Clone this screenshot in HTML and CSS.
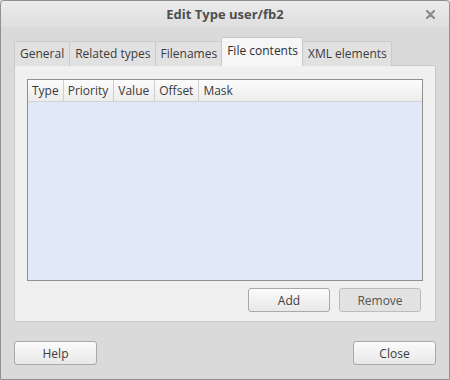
FILE: index.html
```html
<!DOCTYPE html>
<html lang="en">
<head>
    <meta charset="UTF-8">
    <title>Edit Type user/fb2</title>
    <link rel="stylesheet" href="styles.css">
</head>
<body>
    <div class="window">
        <div class="titlebar">
            <span class="title">Edit Type user/fb2</span>
            <svg class="close-x" width="9" height="9" viewBox="0 0 9 9">
                <path d="M1 1L8 8M8 1L1 8" stroke="#8a8a8a" stroke-width="2.2" stroke-linecap="round"/>
            </svg>
        </div>
        <div class="content">
            <div class="tabs">
                <div class="tab">General</div>
                <div class="tab">Related types</div>
                <div class="tab">Filenames</div>
                <div class="tab active">File contents</div>
                <div class="tab">XML elements</div>
            </div>
            <div class="panel">
                <div class="tree">
                    <div class="tree-header">
                        <div class="col">Type</div>
                        <div class="col">Priority</div>
                        <div class="col">Value</div>
                        <div class="col">Offset</div>
                        <div class="col last">Mask</div>
                    </div>
                    <div class="tree-body"></div>
                </div>
                <div class="panel-buttons">
                    <button class="btn">Add</button>
                    <button class="btn disabled">Remove</button>
                </div>
            </div>
            <div class="dialog-buttons">
                <button class="btn wide">Help</button>
                <button class="btn wide">Close</button>
            </div>
        </div>
    </div>
</body>
</html>
```

FILE: styles.css
```css
* {
    box-sizing: border-box;
    margin: 0;
    padding: 0;
}
body {
    font-family: "Open Sans", "Noto Sans", sans-serif;
    font-size: 12px;
    color: #3c3c3c;
    background: #dadada;
}
/* window frame */
.window {
    width: 450px;
    height: 380px;
    border: 1px solid #909090;
    border-radius: 4px 4px 0 0;
    background: #dadada;
    display: flex;
    flex-direction: column;
}
.titlebar {
    height: 26px;
    position: relative;
    display: flex;
    align-items: center;
    justify-content: center;
    background: linear-gradient(#ececec, #dedede);
    border-radius: 4px 4px 0 0;
}
.title {
    font-weight: bold;
    font-size: 13px;
    color: #4f4f4f;
}
.close-x {
    position: absolute;
    right: 14px;
    top: 9px;
}
.content {
    flex: 1;
    padding: 11px 13px 0 13px;
    display: flex;
    flex-direction: column;
}
/* tabs */
.tabs {
    display: flex;
    align-items: flex-end;
    height: 28px;
    position: relative;
    z-index: 1;
}
.tab {
    height: 25px;
    padding: 0 4px 0 5px;
    line-height: 23px;
    background: #e1e1e1;
    border: 1px solid #cbcbcb;
    border-bottom: none;
    border-right: none;
    border-radius: 2px 2px 0 0;
}
.tab:first-child {
    padding-right: 5px;
}
.tab:last-child {
    border-right: 1px solid #cbcbcb;
}
.tab.active {
    height: 29px;
    line-height: 26px;
    background: #f6f6f6;
    border-color: #c8c8c8;
    border-right: 1px solid #c8c8c8;
    color: #2e2e2e;
}
.tab.active + .tab {
    border-left: none;
}
.panel {
    height: 257px;
    margin-top: -1px;
    background: #f0f0f0;
    border: 1px solid #c8c8c8;
    border-radius: 0 2px 2px 2px;
    padding: 13px 12px 0 12px;
}
/* list */
.tree {
    height: 202px;
    border: 1px solid #8f8f8f;
    display: flex;
    flex-direction: column;
}
.tree-header {
    height: 22px;
    display: flex;
    background: linear-gradient(#fcfcfc, #ececec);
    border-bottom: 1px solid #d4d4d4;
}
.col {
    padding: 0 5px 0 4px;
    line-height: 22px;
    border-right: 1px solid #cfcfcf;
    color: #3a3a3a;
}
.col:first-child {
    padding-right: 4px;
}
.col.last {
    border-right: none;
}
.tree-body {
    flex: 1;
    background: #e1e8f8;
}
/* buttons */
.panel-buttons {
    display: flex;
    justify-content: flex-end;
    gap: 9px;
    margin-top: 7px;
    padding-right: 2px;
}
.btn {
    width: 82px;
    height: 24px;
    font-family: inherit;
    font-size: 12px;
    color: #3c3c3c;
    background: linear-gradient(#fbfbfb, #e8e8e8);
    border: 1px solid #a9a9a9;
    border-radius: 3px;
}
.btn.disabled {
    background: #e2e2e2;
    border-color: #bcbcbc;
    color: #555;
}
.btn.wide {
    width: 83px;
}
.dialog-buttons {
    display: flex;
    justify-content: space-between;
    margin-top: 19px;
}
```
